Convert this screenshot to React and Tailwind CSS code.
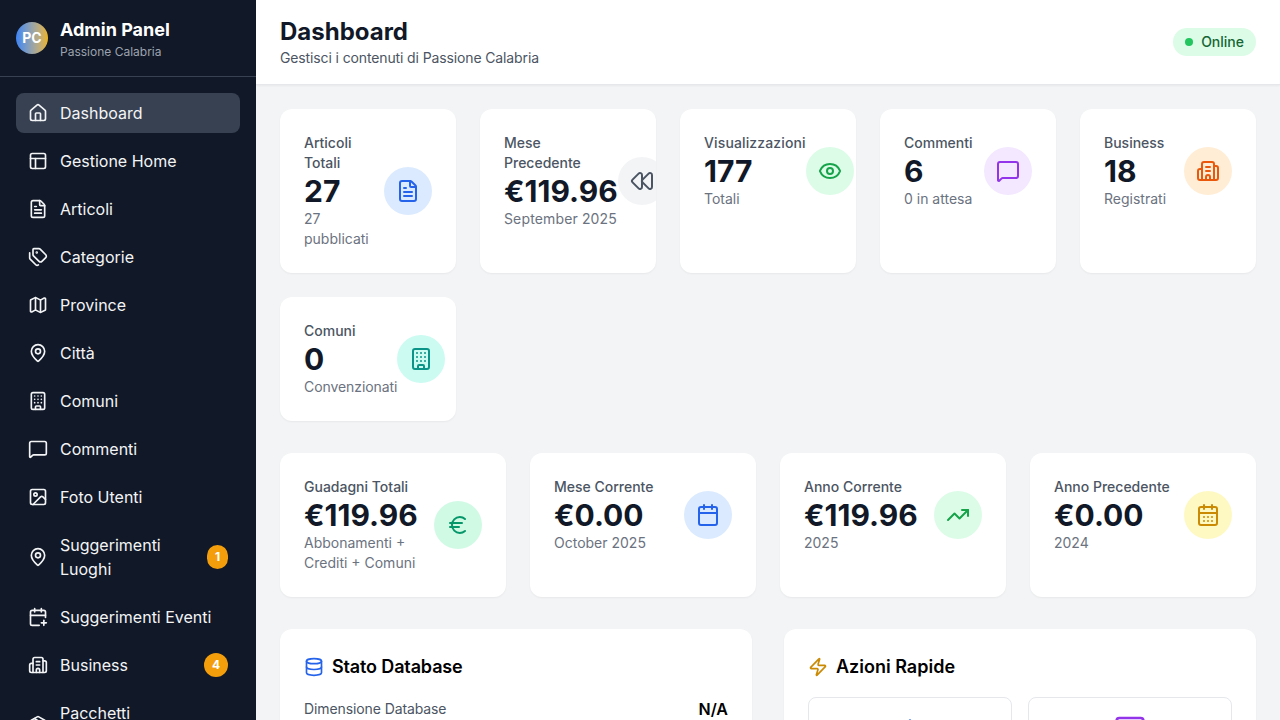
import React from "react";
import {
  House,
  PanelsTopLeft,
  FileText,
  Tags,
  Map,
  MapPin,
  Building,
  MessageSquare,
  Image,
  CalendarPlus,
  Building2,
  Package,
  Rewind,
  Eye,
  Euro,
  Calendar,
  TrendingUp,
  CalendarDays,
  Database,
  Zap,
  Plus,
} from "lucide-react";

const navItems = [
  { label: "Dashboard", icon: House, active: true },
  { label: "Gestione Home", icon: PanelsTopLeft },
  { label: "Articoli", icon: FileText },
  { label: "Categorie", icon: Tags },
  { label: "Province", icon: Map },
  { label: "Città", icon: MapPin },
  { label: "Comuni", icon: Building },
  { label: "Commenti", icon: MessageSquare },
  { label: "Foto Utenti", icon: Image },
  { label: "Suggerimenti Luoghi", icon: MapPin, badge: "1", narrow: true },
  { label: "Suggerimenti Eventi", icon: CalendarPlus },
  { label: "Business", icon: Building2, badge: "4" },
  { label: "Pacchetti Abbonamento", icon: Package },
];

const topStats = [
  { label: "Articoli Totali", value: "27", sub: "27 pubblicati", icon: FileText, tone: "bg-[#dbeafe] text-[#2563eb]" },
  { label: "Mese Precedente", value: "€119.96", sub: "September 2025", subClass: "tracking-[0.14px]", icon: Rewind, tone: "bg-[#f3f4f6] text-[#4b5563]" },
  { label: "Visualizzazioni", labelClass: "tracking-[0.13px]", value: "177", sub: "Totali", icon: Eye, tone: "bg-[#dcfce7] text-[#16a34a]" },
  { label: "Commenti", value: "6", sub: "0 in attesa", icon: MessageSquare, tone: "bg-[#f3e8ff] text-[#9333ea]" },
  { label: "Business", value: "18", sub: "Registrati", icon: Building2, tone: "bg-[#ffedd5] text-[#ea580c]" },
  { label: "Comuni", value: "0", sub: "Convenzionati", subClass: "tracking-[-0.08px]", icon: Building, tone: "bg-[#ccfbf1] text-[#0d9488]" },
];

const revenueStats = [
  { label: "Guadagni Totali", value: "€119.96", sub: "Abbonamenti + Crediti + Comuni", icon: Euro, tone: "bg-[#d1fae5] text-[#059669]" },
  { label: "Mese Corrente", value: "€0.00", sub: "October 2025", icon: Calendar, tone: "bg-[#dbeafe] text-[#2563eb]" },
  { label: "Anno Corrente", value: "€119.96", sub: "2025", icon: TrendingUp, tone: "bg-[#dcfce7] text-[#16a34a]" },
  { label: "Anno Precedente", value: "€0.00", sub: "2024", icon: CalendarDays, tone: "bg-[#fef9c3] text-[#ca8a04]" },
];

const StatCard = ({ stat }) => {
  const Icon = stat.icon;
  return (
    <div className="bg-white rounded-xl shadow-[0_1px_2px_0_rgba(0,0,0,0.05)] p-6 overflow-hidden">
      <div className="flex items-center justify-between">
        <div>
          <p className={`text-sm font-medium text-[#4b5563] ${stat.labelClass || ""}`}>{stat.label}</p>
          <p className="text-3xl font-bold text-[#111827]">{stat.value}</p>
          <p className={`text-sm text-[#6b7280] ${stat.subClass || ""}`}>{stat.sub}</p>
        </div>
        <div className={`w-12 h-12 rounded-full flex items-center justify-center shrink-0 ${stat.tone}`}>
          <Icon className="w-6 h-6" />
        </div>
      </div>
    </div>
  );
};

const App = () => {
  return (
    <div className="flex h-screen overflow-hidden bg-[#f3f4f6] font-['Inter',sans-serif]">
      {/* Sidebar */}
      <aside className="w-64 shrink-0 bg-[#111827] text-white overflow-hidden">
        <div className="flex items-center gap-3 p-4 border-b border-[#374151]">
          <div className="w-8 h-8 rounded-full bg-linear-to-r from-[#3b82f6] to-[#eab308] flex items-center justify-center text-sm font-bold">
            PC
          </div>
          <div>
            <h1 className="text-lg font-bold">Admin Panel</h1>
            <p className="text-xs text-[#9ca3af]">Passione Calabria</p>
          </div>
        </div>
        <nav className="p-4 space-y-2">
          {navItems.map((item) => {
            const Icon = item.icon;
            return (
              <a
                key={item.label}
                href="#"
                className={`flex items-center gap-3 px-3 py-2 rounded-lg text-[#f3f4f6] ${
                  item.active ? "bg-[#374151]" : ""
                }`}
              >
                <Icon className="w-5 h-5 shrink-0" />
                <span>{item.label}</span>
                {item.badge && (
                  <span
                    className={`ml-auto h-6 shrink-0 rounded-full bg-[#f59e0b] text-white text-xs font-bold flex items-center justify-center ${
                      item.narrow ? "w-[21px]" : "w-6"
                    }`}
                  >
                    {item.badge}
                  </span>
                )}
              </a>
            );
          })}
        </nav>
      </aside>

      <div className="flex-1 flex flex-col min-w-0">
        {/* Header */}
        <header className="bg-white border-b border-[#e5e7eb] shadow-[0_1px_2px_0_rgba(0,0,0,0.05)] px-6 py-4 flex items-center justify-between">
          <div>
            <h2 className="text-2xl font-bold text-[#111827]">Dashboard</h2>
            <p className="text-sm text-[#4b5563] tracking-[-0.125px]">Gestisci i contenuti di Passione Calabria</p>
          </div>
          <div className="flex items-center gap-2 px-3 py-1 rounded-full bg-[#dcfce7] text-[#166534] text-sm font-medium">
            <span className="w-2 h-2 rounded-full bg-[#22c55e]"></span>
            Online
          </div>
        </header>

        <main className="flex-1 overflow-hidden p-6">
          <div className="grid grid-cols-5 gap-6 mb-8">
            {topStats.map((stat) => (
              <StatCard key={stat.label} stat={stat} />
            ))}
          </div>

          <div className="grid grid-cols-4 gap-6 mb-8">
            {revenueStats.map((stat) => (
              <StatCard key={stat.label} stat={stat} />
            ))}
          </div>

          <div className="grid grid-cols-2 gap-8">
            <div className="bg-white rounded-xl shadow-[0_1px_2px_0_rgba(0,0,0,0.05)] p-6">
              <h3 className="text-lg font-semibold flex items-center gap-2 mb-4 text-black tracking-[-0.14px]">
                <Database className="w-5 h-5 text-[#2563eb]" />
                Stato Database
              </h3>
              <div className="flex items-center justify-between">
                <span className="text-sm text-[#4b5563] tracking-[-0.1px]">Dimensione Database</span>
                <span className="font-semibold text-black">N/A</span>
              </div>
            </div>
            <div className="bg-white rounded-xl shadow-[0_1px_2px_0_rgba(0,0,0,0.05)] p-6">
              <h3 className="text-lg font-semibold flex items-center gap-2 mb-4 text-black">
                <Zap className="w-5 h-5 text-[#ca8a04]" />
                Azioni Rapide
              </h3>
              <div className="grid grid-cols-2 gap-4">
                <div className="border border-[#e5e7eb] rounded-lg p-4 flex flex-col items-center">
                  <Plus className="w-8 h-8 text-[#2563eb]" />
                  <span className="text-sm font-medium mt-2">Nuovo Articolo</span>
                </div>
                <div className="border border-[#e5e7eb] rounded-lg p-4 flex flex-col items-center">
                  <MessageSquare className="w-8 h-8 text-[#9333ea]" />
                  <span className="text-sm font-medium mt-2">Modera Commenti</span>
                </div>
              </div>
            </div>
          </div>
        </main>
      </div>
    </div>
  );
};

export default App;
